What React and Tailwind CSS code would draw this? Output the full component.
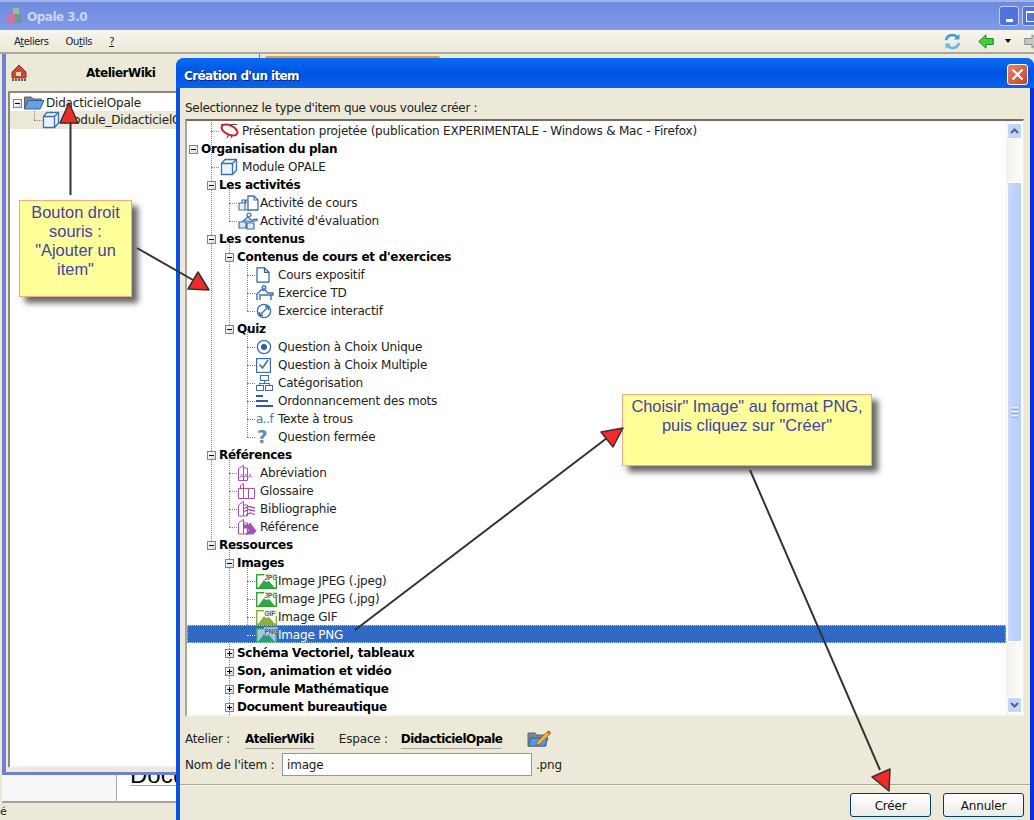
import React from "react";

const ROW_H = 18;

const Cube = () => (
  <svg width="18" height="18" viewBox="0 0 18 18" fill="#eef3fb" stroke="#3f6fb0" strokeWidth="1.3">
    <path d="M1.5 5.5l3.5-4h11.5v10.5l-4 4.5h-11z" />
    <path d="M1.5 5.5h11v11M12.5 5.5l4-4" fill="none" />
  </svg>
);

const Projection = () => (
  <svg width="20" height="16" viewBox="0 0 20 16" fill="none">
    <path d="M1 1.5h16M9 11l-2 4M10 11l2 4" stroke="#555" strokeWidth="1.2" />
    <ellipse cx="9.5" cy="7" rx="8.5" ry="4.5" transform="rotate(25 9.5 7)" stroke="#d42020" strokeWidth="2" />
  </svg>
);

const Course = () => (
  <svg width="21" height="17" viewBox="0 0 21 17" fill="#eef3fb" stroke="#3f6fb0" strokeWidth="1.1">
    <path d="M1 8h6v7H1zM7 5h5v10H7zM4 5h4v3H4z" />
    <path d="M10 1h6l4 4v10H10z" fill="#fff" strokeWidth="1.3" />
    <path d="M16 1v4h4" fill="none" />
  </svg>
);

const Evaluation = () => (
  <svg width="21" height="18" viewBox="0 0 21 18" fill="#dfe8f6" stroke="#3f6fb0" strokeWidth="1.2">
    <circle cx="11" cy="3" r="2" />
    <path d="M5 9l5-4 3 3 6-1v1.5l-7 1.5-3-1H5z" />
    <path d="M1 10h7v6H1zM9 11h7v6H9z" />
  </svg>
);

const Page = () => (
  <svg width="14" height="16" viewBox="0 0 14 16" fill="#fff" stroke="#2f5f9f" strokeWidth="1.2">
    <path d="M1 .8h7.5l4.5 4.5v9.9H1z" />
    <path d="M8.5 .8v4.5H13" fill="none" />
  </svg>
);

const Desk = () => (
  <svg width="18" height="16" viewBox="0 0 18 16" fill="none" stroke="#3f6fb0" strokeWidth="1.4">
    <circle cx="8" cy="2.5" r="1.8" fill="#dfe8f6" />
    <path d="M1 15V9l4-4h4l3 3h5v2H3M4 15v-4M15 10v5" />
  </svg>
);

const Interactive = () => (
  <svg width="16" height="16" viewBox="0 0 16 16" fill="none" stroke="#3f6fb0" strokeWidth="1.4">
    <circle cx="8" cy="8" r="6.6" />
    <path d="M3.5 12.5l9-9M9 3.5h3.5V7M7 12.5H3.5V9" />
  </svg>
);

const Radio = () => (
  <svg width="16" height="16" viewBox="0 0 16 16" fill="none">
    <circle cx="8" cy="8" r="6.6" stroke="#3f6fb0" strokeWidth="1.3" />
    <circle cx="8" cy="8" r="3" fill="#2f5f9f" />
  </svg>
);

const Check = () => (
  <svg width="15" height="15" viewBox="0 0 15 15" fill="none" stroke="#3f6fb0">
    <rect x=".6" y=".6" width="13.8" height="13.8" strokeWidth="1.2" />
    <path d="M3.5 6.5l3 3.5 5.5-8" strokeWidth="1.6" />
  </svg>
);

const Categories = () => (
  <svg width="17" height="16" viewBox="0 0 17 16" fill="#fff" stroke="#3f6fb0" strokeWidth="1.1">
    <rect x="4.5" y=".5" width="8" height="5" />
    <path d="M8.5 5.5v3M3.5 10.5v-2h10v2" fill="none" />
    <rect x=".5" y="10.5" width="7" height="5" />
    <rect x="9.5" y="10.5" width="7" height="5" />
  </svg>
);

const Ordering = () => (
  <svg width="17" height="14" viewBox="0 0 17 14" fill="#2f5f9f">
    <rect x="0" y="1" width="7" height="2" />
    <rect x="0" y="6" width="12" height="2" />
    <rect x="0" y="11" width="17" height="2" />
  </svg>
);

const Holes = () => (
  <span className="text-[12px] leading-none tracking-[-0.5px] text-[#4f78b5]">a..f</span>
);

const Closed = () => (
  <span className="ml-[1px] text-[18px] font-bold leading-none text-[#5f86c0]">?</span>
);

const Abbrev = () => (
  <svg width="17" height="16" viewBox="0 0 17 16" fill="#fff" stroke="#a64fb8" strokeWidth="1">
    <path d="M.5 3.5l5-3v15h-5zM5.5 3h4v12.5h-4z" />
    <text x="1.5" y="13" fontSize="6" stroke="none" fill="#b060c0">AAA</text>
  </svg>
);

const Glossary = () => (
  <svg width="17" height="16" viewBox="0 0 17 16" fill="#fff" stroke="#a64fb8" strokeWidth="1">
    <path d="M.5 5.5h5v10h-5zM5.5 5.5h5v10h-5zM10.5 5.5h6v10h-6zM2.5 5.5v-3l3-2v5" />
  </svg>
);

const Biblio = () => (
  <svg width="18" height="16" viewBox="0 0 18 16" fill="#fff" stroke="#a64fb8" strokeWidth="1">
    <path d="M.5 4l5-3.5V15h-5zM5.5 4h4v11h-4z" />
    <path d="M6 7.5l5-2 6 1.5M6 10.5l5-2 6 1.5M8 14l4-2 5 1.5" fill="none" strokeWidth="1.3" />
  </svg>
);

const Reference = () => (
  <svg width="19" height="16" viewBox="0 0 19 16" fill="#fff" stroke="#a64fb8" strokeWidth="1">
    <path d="M.5 4l5-3.5V15h-5zM5.5 4h4v11h-4z" />
    <path d="M6 6h5l1-2 6 8-3 3H8l2-3 2 1-2-4H6z" fill="#a64fb8" />
  </svg>
);

const ImageIcon = ({ label, frame, sky, hill, selected }) => (
  <svg width="22" height="16" viewBox="0 0 22 16" className="block">
    <rect x=".7" y="1.7" width="19.6" height="13.6" fill={sky} stroke={frame} strokeWidth="1.4" />
    <path d="M2 15l6-8 2 2 3-1 6 7z" fill={hill} />
    <rect x="8" y="0" width="14" height="7" fill={selected ? "#b9cbe8" : "#fff"} opacity=".75" />
    <text x="8.5" y="6.5" fontSize="6.5" fontWeight="700" fill="#555" fontFamily="Liberation Sans, sans-serif">{label}</text>
  </svg>
);

const icons = {
  projection: <Projection />,
  cube: <Cube />,
  course: <Course />,
  evaluation: <Evaluation />,
  page: <Page />,
  desk: <Desk />,
  interactive: <Interactive />,
  radio: <Radio />,
  check: <Check />,
  categories: <Categories />,
  ordering: <Ordering />,
  holes: <Holes />,
  closed: <Closed />,
  abbrev: <Abbrev />,
  glossary: <Glossary />,
  biblio: <Biblio />,
  reference: <Reference />,
  jpg: <ImageIcon label="JPG" frame="#2fa12f" sky="#fff" hill="#2fa84a" />,
  gif: <ImageIcon label="GIF" frame="#8ab03a" sky="#fff" hill="#8ab03a" />,
  png: <ImageIcon label="PNG" frame="#3aa06a" sky="#a9c4ea" hill="#2f9f70" selected />,
};

const rows = [
  { d: 0, label: "Présentation projetée (publication EXPERIMENTALE - Windows & Mac - Firefox)", icon: "projection" },
  { d: 0, label: "Organisation du plan", open: true },
  { d: 0, label: "Module OPALE", icon: "cube" },
  { d: 1, label: "Les activités", open: true },
  { d: 1, label: "Activité de cours", icon: "course" },
  { d: 1, label: "Activité d'évaluation", icon: "evaluation" },
  { d: 1, label: "Les contenus", open: true },
  { d: 2, label: "Contenus de cours et d'exercices", open: true },
  { d: 2, label: "Cours expositif", icon: "page" },
  { d: 2, label: "Exercice TD", icon: "desk" },
  { d: 2, label: "Exercice interactif", icon: "interactive" },
  { d: 2, label: "Quiz", open: true },
  { d: 2, label: "Question à Choix Unique", icon: "radio" },
  { d: 2, label: "Question à Choix Multiple", icon: "check" },
  { d: 2, label: "Catégorisation", icon: "categories" },
  { d: 2, label: "Ordonnancement des mots", icon: "ordering" },
  { d: 2, label: "Texte à trous", icon: "holes" },
  { d: 2, label: "Question fermée", icon: "closed" },
  { d: 1, label: "Références", open: true },
  { d: 1, label: "Abréviation", icon: "abbrev" },
  { d: 1, label: "Glossaire", icon: "glossary" },
  { d: 1, label: "Bibliographie", icon: "biblio" },
  { d: 1, label: "Référence", icon: "reference" },
  { d: 1, label: "Ressources", open: true },
  { d: 2, label: "Images", open: true },
  { d: 2, label: "Image JPEG (.jpeg)", icon: "jpg" },
  { d: 2, label: "Image JPEG (.jpg)", icon: "jpg" },
  { d: 2, label: "Image GIF", icon: "gif" },
  { d: 2, label: "Image PNG", icon: "png", selected: true },
  { d: 2, label: "Schéma Vectoriel, tableaux", open: false },
  { d: 2, label: "Son, animation et vidéo", open: false },
  { d: 2, label: "Formule Mathématique", open: false },
  { d: 2, label: "Document bureautique", open: false },
];

// vertical tree guides: x inside the list, first row, last row
const guides = [
  [24, -1, 23],
  [42, 3, 5],
  [42, 6, 11],
  [42, 18, 22],
  [42, 23, 33],
  [60, 7, 10],
  [60, 11, 17],
  [60, 24, 28],
];

const Expander = ({ open }) => (
  <span className="relative z-10 flex h-[9px] w-[9px] shrink-0 items-center justify-center border border-[#7b7bc8] bg-linear-to-br from-white to-[#d8d8e4]">
    <span className="h-px w-[5px] bg-black" />
    {!open && <span className="absolute h-[5px] w-px bg-black" />}
  </span>
);

const TreeRow = ({ row }) => {
  if (!row.icon) {
    return (
      <div className="relative flex h-[18px] items-center pt-[2px]" style={{ paddingLeft: 2 + 18 * row.d }}>
        <Expander open={row.open} />
        <span className="ml-[3px] whitespace-nowrap text-[12px] font-bold tracking-[-0.3px] text-black">{row.label}</span>
      </div>
    );
  }
  return (
    <div
      className={`relative flex h-[18px] items-center pt-[2px] ${
        row.selected ? "bg-[#316ac5] text-white outline outline-1 -outline-offset-1 outline-dotted outline-[#b9cbe8]" : "text-[#222]"
      }`}
      style={{ paddingLeft: 33 + 18 * row.d }}
    >
      <span
        className={`absolute top-[10px] w-[8px] border-t border-dotted ${row.selected ? "border-white" : "border-[#888]"}`}
        style={{ left: 24 + 18 * row.d }}
      />
      <span className="flex w-[22px] shrink-0 items-center">{icons[row.icon]}</span>
      <span className="whitespace-nowrap text-[12px] tracking-[-0.19px]">{row.label}</span>
    </div>
  );
};

const ScrollButton = ({ up }) => (
  <div className="flex h-[16px] w-[15px] items-center justify-center rounded-[2px] border border-white bg-[#c3d5fb]">
    <svg width="9" height="6" viewBox="0 0 9 6" fill="none" stroke="#4d6185" strokeWidth="2">
      <path d={up ? "M1 5l3.5-3.5L8 5" : "M1 1l3.5 3.5L8 1"} />
    </svg>
  </div>
);

const Scrollbar = () => (
  <div className="flex w-[17px] shrink-0 flex-col items-center bg-linear-to-r from-[#f3f1ec] to-[#fdfdfb] py-[2px]">
    <ScrollButton up />
    <div className="mt-[43px] flex h-[460px] w-[15px] flex-col items-center justify-center gap-px rounded-[2px] border border-white bg-linear-to-r from-[#c9d8fc] to-[#b7ccf9]">
      <span className="h-px w-[7px] bg-[#eef3ff]" />
      <span className="h-px w-[7px] bg-[#8cabf0]" />
      <span className="h-px w-[7px] bg-[#eef3ff]" />
      <span className="h-px w-[7px] bg-[#8cabf0]" />
      <span className="h-px w-[7px] bg-[#eef3ff]" />
      <span className="h-px w-[7px] bg-[#8cabf0]" />
    </div>
    <div className="flex-1" />
    <ScrollButton />
  </div>
);

const FolderEdit = () => (
  <svg width="24" height="18" viewBox="0 0 24 18">
    <path d="M1 3h7l2 2h9v11H1z" fill="#7d8794" stroke="#5c6672" />
    <path d="M1 16l3-8h17l-3 8z" fill="#5d95da" stroke="#2f5f9f" />
    <path d="M10 12L20 2l3 2-10 10-4 1z" fill="#f0b040" stroke="#8a5a18" strokeWidth=".7" />
    <path d="M20 2l1.5-1.500 2.500 2-1 1.500z" fill="#d84a30" />
  </svg>
);

const DialogButton = ({ children }) => (
  <div className="flex h-[24px] w-[81px] items-center justify-center rounded-[3px] border border-[#003c74] bg-linear-to-b from-white to-[#ecebe5] pt-[1px] text-[12px] tracking-[-0.2px] text-[#111]">
    {children}
  </div>
);

const Underlined = ({ children }) => (
  <span className="border-b border-[#aca899] text-[12px] font-bold tracking-[-0.55px] text-black">{children}</span>
);

const Dialog = () => (
  <div className="absolute left-[176px] top-[58px] flex h-[762px] w-[858px] flex-col rounded-t-[8px] border-x-4 border-l-[#0a50e2] border-r-[#0831d9] bg-[#ece9d8]">
    <div className="-mx-1 flex h-[30px] shrink-0 items-center justify-between rounded-t-[8px] bg-linear-to-b from-[#0a6cf5] via-[#0053e0] to-[#0a63ec] pl-[8px] pr-[6px] pt-[3px]">
      <span className="pt-[3px] text-[12px] font-bold tracking-[-0.6px] text-white [text-shadow:1px_1px_0_#0a246a]">Création d'un item</span>
      <div className="flex h-[21px] w-[21px] items-center justify-center rounded-[3px] border border-white bg-linear-to-br from-[#e8836a] to-[#c8401c]">
        <svg width="13" height="13" viewBox="0 0 13 13" stroke="#fff" strokeWidth="2">
          <path d="M1.500 1.500l10 10M11.500 1.500l-10 10" />
        </svg>
      </div>
    </div>

    <div className="flex min-h-0 flex-1 flex-col pl-[5px] pr-[6px]">
      <div className="mt-[11px] h-[20px] text-[12px] leading-[18px] tracking-[-0.3px] text-[#222]">
        Selectionnez le type d'item que vous voulez créer :
      </div>

      <div className="flex h-[598px] shrink-0 border-l-2 border-t-2 border-l-[#aca899] border-t-[#716f64] border-b-2 border-b-[#f1efe2] border-r border-r-[#f1efe2] bg-white">
        <div className="relative min-w-0 flex-1 overflow-hidden">
          {guides.map(([x, from, to]) => (
            <span
              key={`${x}-${from}`}
              className="absolute w-0 border-l border-dotted border-[#888]"
              style={{ left: x, top: from * ROW_H + 10, height: (to - from) * ROW_H }}
            />
          ))}
          {rows.map((row) => (
            <TreeRow key={row.label + row.icon} row={row} />
          ))}
        </div>
        <Scrollbar />
      </div>

      <div className="mt-[12px] flex h-[18px] items-center pt-[2px] text-[12px] tracking-[-0.19px] text-[#222]">
        <span className="w-[60px]">Atelier :</span>
        <Underlined>AtelierWiki</Underlined>
        <span className="ml-[25px] w-[62px]">Espace :</span>
        <Underlined>DidacticielOpale</Underlined>
        <span className="ml-[25px]">
          <FolderEdit />
        </span>
      </div>

      <div className="mt-[6px] flex h-[23px] items-center text-[12px] tracking-[-0.19px] text-[#222]">
        <span className="w-[97px]">Nom de l'item :</span>
        <div className="flex h-[23px] w-[250px] items-center border border-[#7f9db9] bg-white pl-[4px]">image</div>
        <span className="ml-[4px]">.png</span>
      </div>

      <div className="-ml-[5px] -mr-[6px] mt-[8px] h-[2px] border-t border-[#aca899] bg-white/40" />

      <div className="mt-[7px] flex justify-end gap-[12px]">
        <DialogButton>Créer</DialogButton>
        <DialogButton>Annuler</DialogButton>
      </div>
    </div>
  </div>
);

const Callout = ({ className, children }) => (
  <div
    className={`absolute border border-[#f2a98a] bg-[#ffff99] text-center font-['Liberation_Sans',sans-serif] text-[16.4px] leading-[19px] text-[#4343a8] shadow-[6px_6px_6px_rgba(0,0,0,0.6)] ${className}`}
  >
    {children}
  </div>
);

const Arrows = () => (
  <svg className="absolute left-0 top-0" width="1034" height="820" fill="none">
    <g stroke="#333" strokeWidth="2">
      <path d="M70.500 195V120M137 248l56 32M355 630l252-192M750 470l130 300" />
    </g>
    <g fill="#f32a2a" stroke="#333" strokeWidth="1.500" strokeLinejoin="round">
      <path d="M69 103l-9 20h18z" />
      <path d="M198 272l-10 17 21 1z" />
      <path d="M623 428l-22 4 12 15z" />
      <path d="M890 769l-18 8 17 14z" />
    </g>
  </svg>
);

const Win = () => (
  <div className="relative flex h-[820px] w-[1034px] flex-col overflow-hidden bg-[#ece9d8] font-['DejaVu_Sans',sans-serif] text-[12px]">
    <div className="flex h-[30px] shrink-0 items-center justify-between border-t-2 border-[#9db3ea] bg-linear-to-b from-[#6f8ade] to-[#7f9be6] pl-[8px]">
      <div className="flex items-center gap-[4px]">
        <svg width="15" height="16" viewBox="0 0 15 16">
          <rect x="5" y="0" width="6" height="6" fill="#9fb8a0" />
          <rect x="0" y="6" width="7" height="9" fill="#c878a0" />
          <rect x="7" y="6" width="7" height="9" fill="#6c9a9c" />
        </svg>
        <span className="pt-[2px] text-[12px] font-bold tracking-[-0.5px] text-[#c9d6f5]">Opale 3.0</span>
      </div>
      <div className="-mr-[8px] flex gap-[3px]">
        <div className="flex h-[20px] w-[20px] items-end justify-center rounded-[3px] border border-[#c3d0f2] bg-[#4f72dc] pb-[3px]">
          <span className="h-[3px] w-[7px] bg-white" />
        </div>
        <div className="flex h-[20px] w-[20px] items-center justify-center rounded-[3px] border border-[#c3d0f2] bg-[#4f72dc]">
          <span className="h-[11px] w-[12px] border border-t-2 border-white" />
        </div>
      </div>
    </div>

    <div className="flex h-[24px] shrink-0 items-center border-b-2 border-[#aca899] bg-linear-to-b from-[#f6f5ef] to-[#ece9d8] pl-[14px] text-[10px] tracking-[-0.4px] text-[#222]">
      <span>A<u>t</u>eliers</span>
      <span className="ml-[17px]">Ou<u>t</u>ils</span>
      <span className="ml-[17px]"><u>?</u></span>
      <div className="-mr-[4px] ml-auto flex items-center">
        <svg width="17" height="17" viewBox="0 0 17 17" fill="none" strokeWidth="2.600">
          <path d="M2 7a6.500 6.500 0 0 1 11-3" stroke="#3b9ee0" />
          <path d="M15 10a6.500 6.500 0 0 1-11 3" stroke="#62b8e8" />
          <path d="M15.500 1v5.500H10z" fill="#3b9ee0" />
          <path d="M1.500 16v-5.500H7z" fill="#62b8e8" />
        </svg>
        <svg className="ml-[17px]" width="16" height="15" viewBox="0 0 16 15">
          <path d="M.8 7.500L8 .8v3.700h7.200v6H8v3.700z" fill="#3fd03f" stroke="#1a8a1a" />
        </svg>
        <span className="ml-[11px] h-0 w-0 border-x-[3px] border-t-[4px] border-x-transparent border-t-black" />
        <svg className="ml-[13px]" width="14" height="15" viewBox="0 0 14 15">
          <path d="M15 7.500L8 .8v3.700H.8v6H8v3.700z" fill="#c8c8c8" stroke="#8c8c8c" />
        </svg>
      </div>
    </div>

    <div className="flex h-[749px] shrink-0 flex-col overflow-hidden pl-[2px]">
      <div className="flex h-[721px] w-[230px] shrink-0 flex-col border-b-[3px] border-l-[4px] border-[#6f80d4] bg-[#ece9d8] pb-[4px] pl-[2px]">
        <div className="flex h-[37px] shrink-0 items-center pl-[3px]">
          <svg width="17" height="18" viewBox="0 0 17 18">
            <path d="M1 8l7-7 7 7v6H1z" fill="#c8483c" stroke="#8a3a20" />
            <rect x="5" y="8" width="5" height="4" fill="#f2d8a0" />
            <path d="M1 16h14" stroke="#555" strokeDasharray="2 1" strokeWidth="2" />
          </svg>
          <span className="ml-[58px] pt-[1px] text-[12px] font-bold tracking-[-0.5px] text-black">AtelierWiki</span>
        </div>
        <div className="min-h-0 flex-1 border-b-2 border-l-2 border-t-2 border-[#8c897a] border-b-[#f1efe2] bg-white">
          <div className="flex h-[18px] items-center pl-[3px] pt-[2px] text-[#222]">
            <Expander open />
            <svg className="ml-[2px]" width="21" height="14" viewBox="0 0 21 14">
              <path d="M.5 13V1h7l2 2h8v3H4z" fill="#7d8794" stroke="#5c6672" />
              <path d="M.5 13L4 4.500h16L16 13z" fill="#6ba0e0" stroke="#2f5f9f" />
            </svg>
            <span className="ml-[1px] whitespace-nowrap tracking-[-0.19px]">DidacticielOpale</span>
          </div>
          <div className="relative flex h-[18px] items-center bg-[#ece9d8] pl-[32px] text-[#222]">
            <span className="absolute left-[24px] top-[9px] w-[8px] border-t border-dotted border-[#888]" />
            <span className="absolute left-[24px] top-0 h-[9px] border-l border-dotted border-[#888]" />
            <Cube />
            <span className="ml-[3px] whitespace-nowrap tracking-[-0.19px]">Module_DidacticielOpale</span>
          </div>
        </div>
      </div>
      <div className="flex h-[28px] w-[230px] shrink-0 border-b-2 border-[#a5a5a0] bg-[#f7f7f7]">
        <div className="w-[115px] border-r border-[#aaa]" />
        <div className="flex-1 overflow-hidden bg-white pl-[13px]">
          <div className="-mt-[12px] h-[23px] border-b border-[#aaa] font-['Liberation_Sans',sans-serif] text-[24px] leading-[23px] text-black">Docu</div>
        </div>
      </div>
    </div>

    <div className="text-[11px] leading-[17px] text-[#222]">é</div>

    <div className="absolute left-[265px] top-[56px] h-[4px] w-[175px] rounded-t-[2px] border-t-2 border-[#f09a28] bg-[#f7c97a]" />
    <div className="absolute left-[259px] top-[54px] h-[6px] w-px bg-[#777]" />

    <Dialog />

    <Callout className="left-[19px] top-[200px] h-[97px] w-[113px] pt-[2px]">
      Bouton droit souris : "Ajouter un item"
    </Callout>
    <Callout className="left-[622px] top-[394px] h-[72px] w-[250px] pt-[2px]">
      Choisir" Image" au format PNG,
      <br />
      puis cliquez sur "Créer"
    </Callout>
    <Arrows />
  </div>
);

export default function App() {
  return <Win />;
}
